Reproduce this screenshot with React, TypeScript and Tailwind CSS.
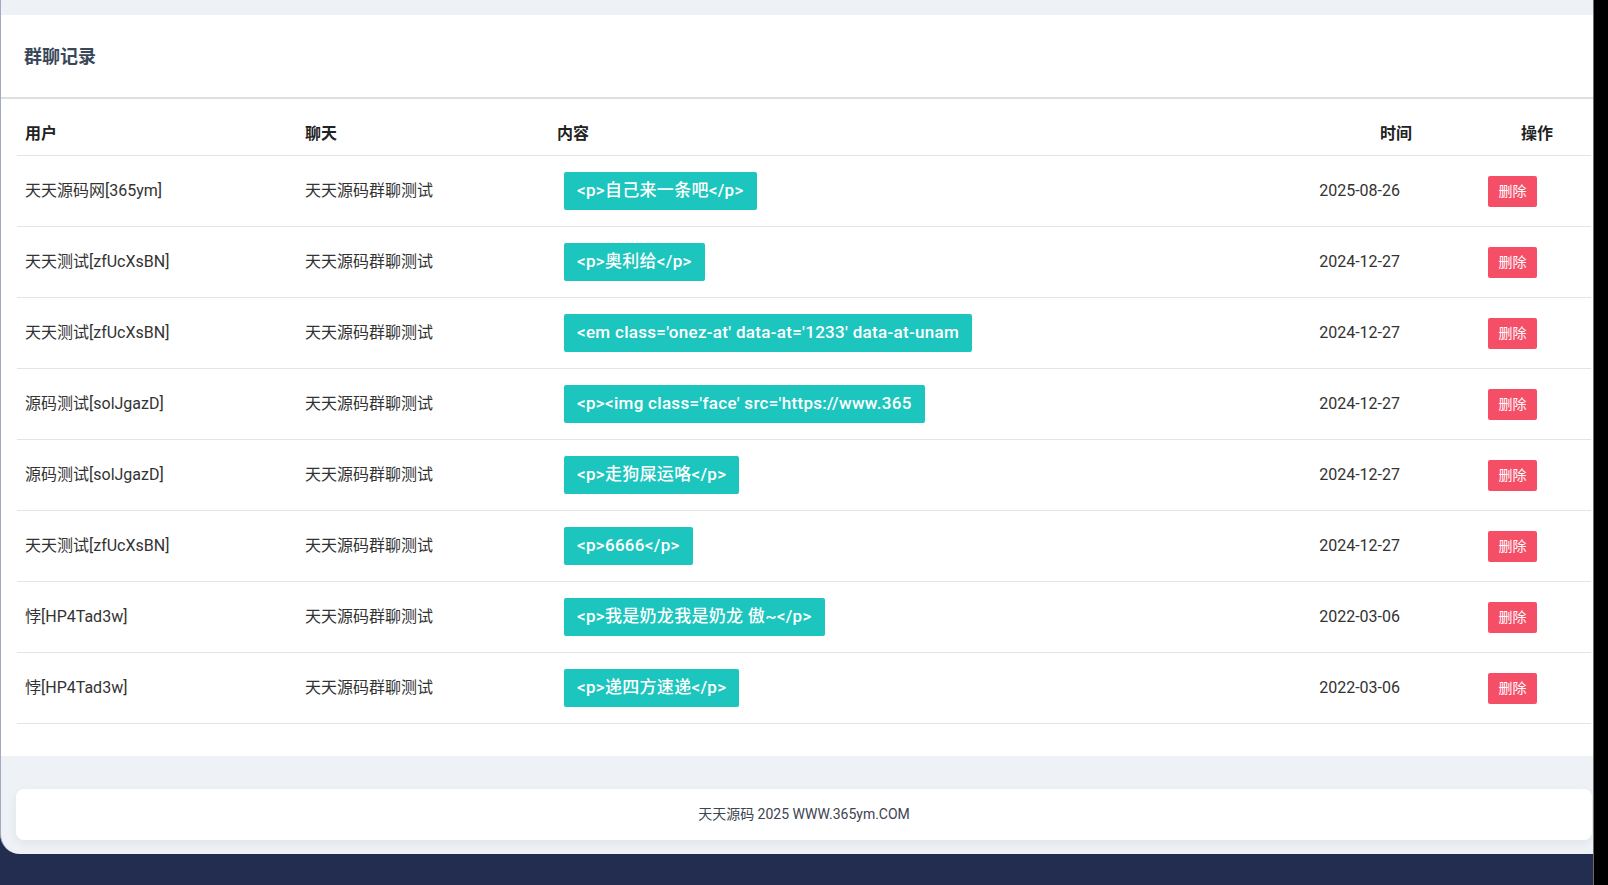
import React from "react";

type Row = {
  user: string;
  chat: string;
  content: string;
  time: string;
};

const rows: Row[] = [
  { user: "天天源码网[365ym]", chat: "天天源码群聊测试", content: "<p>自己来一条吧</p>", time: "2025-08-26" },
  { user: "天天测试[zfUcXsBN]", chat: "天天源码群聊测试", content: "<p>奥利给</p>", time: "2024-12-27" },
  {
    user: "天天测试[zfUcXsBN]",
    chat: "天天源码群聊测试",
    content: "<em class='onez-at' data-at='1233' data-at-unam",
    time: "2024-12-27",
  },
  {
    user: "源码测试[solJgazD]",
    chat: "天天源码群聊测试",
    content: "<p><img class='face' src='https://www.365",
    time: "2024-12-27",
  },
  { user: "源码测试[solJgazD]", chat: "天天源码群聊测试", content: "<p>走狗屎运咯</p>", time: "2024-12-27" },
  { user: "天天测试[zfUcXsBN]", chat: "天天源码群聊测试", content: "<p>6666</p>", time: "2024-12-27" },
  { user: "悖[HP4Tad3w]", chat: "天天源码群聊测试", content: "<p>我是奶龙我是奶龙 傲~</p>", time: "2022-03-06" },
  { user: "悖[HP4Tad3w]", chat: "天天源码群聊测试", content: "<p>递四方速递</p>", time: "2022-03-06" },
];

const font = "font-['Roboto','Noto_Sans_CJK_SC',sans-serif]";

export default function App() {
  return (
    <div className={`flex h-[885px] w-full bg-[#222d4f] ${font}`}>
      <div className="flex h-[854px] w-[1593px] flex-col rounded-bl-[20px] border-l border-[#a3aac0] bg-[#eef2f6] pt-[15px]">
        {/* card */}
        <div className="flex h-[741px] flex-col bg-white">
          <div className="flex h-[84px] items-center border-b-2 border-[#dedfe3] pl-[23px]">
            <h1 className="text-[18px] font-bold text-[#3a4759]">群聊记录</h1>
          </div>

          <div className="ml-[16px] mr-[2px] pt-[14px]">
            <div className="flex h-[43px] items-center border-b border-[#e3e3e8] text-[16px] font-bold text-[#222]">
              <div className="w-[280px] pl-[8px]">用户</div>
              <div className="w-[252px] pl-[8px]">聊天</div>
              <div className="w-[751px] pl-[8px]">内容</div>
              <div className="w-[140px] pr-[28px] text-right">时间</div>
              <div className="w-[151px] pl-[81px]">操作</div>
            </div>

            {rows.map((row, index) => (
              <div
                key={index}
                className="flex h-[71px] items-center border-b border-[#e3e3e8] text-[16px] text-[#333]"
              >
                <div className="w-[280px] pl-[8px]">{row.user}</div>
                <div className="w-[252px] pl-[8px]">{row.chat}</div>
                <div className="w-[751px] pl-[15px]">
                  <span className="inline-flex h-[38px] items-center rounded-[2px] bg-[#1cc5bd] px-[13px] text-[17px] font-medium tracking-[0.3px] text-white">
                    {row.content}
                  </span>
                </div>
                <div className="w-[140px] pr-[40px] text-right">{row.time}</div>
                <div className="w-[151px] pl-[48px]">
                  <button
                    type="button"
                    className="flex h-[31px] w-[49px] items-center justify-center rounded-[2px] bg-[#f54f68] text-[14px] text-white"
                  >
                    删除
                  </button>
                </div>
              </div>
            ))}
          </div>
        </div>

        {/* footer */}
        <div className="ml-[15px] mr-[1px] mt-[33px] flex h-[51px] items-center justify-center rounded-[8px] bg-white text-[14px] text-[#3d4451] shadow-[0_3px_10px_rgba(30,40,70,0.07)]">
          天天源码 2025 WWW.365ym.COM
        </div>
      </div>
      <div className="h-full w-[15px] border-l border-[#6b6b6b] bg-black" />
    </div>
  );
}
